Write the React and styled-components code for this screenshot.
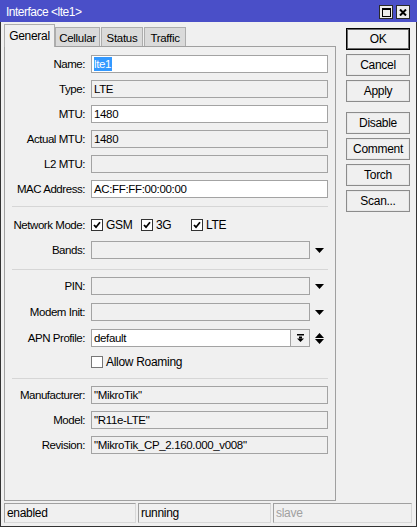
import React from 'react';
import styled, { createGlobalStyle } from 'styled-components';

const Global = createGlobalStyle`
  html, body { margin: 0; padding: 0; background: #f0f0f0; }
  body { font-family: "Liberation Sans", Arial, sans-serif; }
  * { box-sizing: border-box; }
`;

const Window = styled.div`
  width: 417px;
  height: 527px;
  display: flex;
  flex-direction: column;
  background: #f0f0f0;
  font-family: "Liberation Sans", Arial, sans-serif;
  font-size: 11px;
  letter-spacing: -0.3px;
  color: #000;
`;

const TitleBar = styled.div`
  height: 22px;
  flex-shrink: 0;
  background: #4a4fc8;
  color: #fff;
  font-size: 12px;
  letter-spacing: -0.5px;
  display: flex;
  align-items: center;
  padding: 0 7px 0 6px;
`;

const Title = styled.span`
  flex: 1;
  padding-top: 1px;
`;

const TitleButtons = styled.div`
  display: flex;
  gap: 3px;
  margin-top: 2px;
`;

const TitleButton = styled.div`
  width: 14px;
  height: 14px;
  background: #ececec;
  border: 1px solid #2a2a2a;
  display: flex;
  align-items: center;
  justify-content: center;
`;

const Frame = styled.div`
  flex: 1;
  display: flex;
  flex-direction: column;
  border: 1px solid #333;
  border-top: none;
  padding: 2px 3px 3px 3px;
`;

const Main = styled.div`
  display: flex;
  height: 477px;
  gap: 10px;
`;

const LeftCol = styled.div`
  width: 332px;
  display: flex;
  flex-direction: column;
`;

const TabBar = styled.div`
  height: 22px;
  display: flex;
  align-items: flex-end;
  position: relative;
  z-index: 1;
`;

const Tab = styled.div`
  width: ${(p) => p.$w}px;
  height: ${(p) => (p.$active ? 23 : 19)}px;
  margin-bottom: ${(p) => (p.$active ? -1 : 0)}px;
  margin-right: ${(p) => (p.$active ? 0 : 1)}px;
  background: ${(p) => (p.$active ? '#f0f0f0' : '#dadada')};
  border: 1px solid #adadad;
  border-bottom: none;
  display: flex;
  align-items: center;
  justify-content: center;
  padding-top: ${(p) => (p.$active ? 0 : 2)}px;
  font-size: ${(p) => (p.$active ? 12 : 11.5)}px;
`;

const Panel = styled.div`
  flex: 1;
  border: 1px solid #a0a0a0;
  background: #f0f0f0;
  padding: 8px 7px 0 0;
  display: flex;
  flex-direction: column;
`;

const Section = styled.div`
  display: flex;
  flex-direction: column;
  gap: ${(p) => p.$gap ?? 7}px;
  margin-top: ${(p) => p.$mt ?? 0}px;
`;

const Separator = styled.div`
  height: 1px;
  margin: ${(p) => p.$mt}px 0 0 7px;
  background: #d6d6d6;
`;

const Row = styled.div`
  display: grid;
  grid-template-columns: 80px 1fr;
  column-gap: 6px;
  align-items: center;
  height: ${(p) => p.$h ?? 18}px;
`;

const Label = styled.div`
  text-align: right;
  white-space: nowrap;
  font-size: 11.5px;
  letter-spacing: -0.45px;
`;

const FieldLine = styled.div`
  display: flex;
  align-items: center;
  height: 100%;
`;

const Field = styled.div`
  flex: 1;
  height: 18px;
  border: 1px solid #a3a3a3;
  background: ${(p) => (p.$editable ? '#fff' : '#f0f0f0')};
  padding: 0 2px;
  line-height: 16px;
  white-space: nowrap;
  overflow: hidden;
  font-size: 11.5px;
  letter-spacing: -0.35px;
`;

const Selected = styled.span`
  background: #3399ff;
  color: #fff;
  padding: 0 1px 0 0;
  display: inline-block;
  line-height: 14px;
  margin-top: 1px;
`;

const ArrowCell = styled.div`
  width: 18px;
  height: 18px;
  display: flex;
  align-items: center;
  justify-content: center;
  padding-left: 1px;
`;

const SmallButton = styled.div`
  width: 19px;
  height: 18px;
  border: 1px solid #a3a3a3;
  border-left: none;
  background: #f0f0f0;
  display: flex;
  align-items: center;
  justify-content: center;
`;

const CheckGroup = styled.div`
  display: flex;
  align-items: center;
`;

const CheckItem = styled.label`
  width: ${(p) => p.$w ?? 50}px;
  display: flex;
  align-items: center;
  gap: 3px;
  white-space: nowrap;
  font-size: 12px;
`;

const Box = styled.span`
  width: 12px;
  height: 12px;
  border: 1px solid ${(p) => (p.$checked ? '#333' : '#777')};
  background: #fff;
  display: inline-flex;
  align-items: center;
  justify-content: center;
  flex-shrink: 0;
`;

const ButtonCol = styled.div`
  width: 64px;
  display: flex;
  flex-direction: column;
  padding-top: 4px;
`;

const Button = styled.div`
  height: 22px;
  margin-top: ${(p) => p.$mt ?? 4}px;
  border: 1px solid ${(p) => (p.$default ? '#000' : '#8c8c8c')};
  box-shadow: ${(p) => (p.$default ? 'inset 0 0 0 1px #6a6a6a' : 'inset 0 0 0 1px #e8e8e8')};
  background: #f0f0f0;
  display: flex;
  align-items: center;
  justify-content: center;
  font-size: 12px;
`;

const StatusBar = styled.div`
  display: grid;
  grid-template-columns: 132px 133px 139px;
  column-gap: 2px;
  height: 20px;
  margin-top: 2px;
`;

const StatusCell = styled.div`
  border-top: 1px solid #a0a0a0;
  border-left: 1px solid #a0a0a0;
  border-right: 1px solid #d8d8d8;
  border-bottom: 1px solid #d8d8d8;
  padding: 0 2px;
  line-height: 18px;
  font-size: 12px;
  color: ${(p) => (p.$dim ? '#a0a0a0' : '#000')};
`;

const DownArrow = () => (
  <svg width="9" height="5" viewBox="0 0 9 5">
    <polygon points="0,0 9,0 4.5,5" fill="#000" />
  </svg>
);

const UpDown = () => (
  <svg width="9" height="11" viewBox="0 0 9 11">
    <polygon points="4.5,0 9,5 0,5" fill="#000" />
    <polygon points="0,6 9,6 4.5,11" fill="#000" />
  </svg>
);

const DropIcon = () => (
  <svg width="7" height="8" viewBox="0 0 7 8">
    <rect x="0" y="0" width="7" height="1.5" fill="#000" />
    <rect x="2" y="2.5" width="3" height="2" fill="#000" />
    <polygon points="0,4.5 7,4.5 3.5,8" fill="#000" />
  </svg>
);

const Check = () => (
  <svg width="8" height="8" viewBox="0 0 8 8">
    <path d="M1 4 L3 6.2 L7 1.2" stroke="#000" strokeWidth="1.8" fill="none" />
  </svg>
);

const CheckBox = ({ checked, label, w }) => (
  <CheckItem $w={w}>
    <Box $checked={checked}>{checked && <Check />}</Box>
    {label}
  </CheckItem>
);

const TextRow = ({ label, value, editable, children }) => (
  <Row>
    <Label>{label}</Label>
    <FieldLine>
      <Field $editable={editable}>{children ?? value}</Field>
    </FieldLine>
  </Row>
);

const DropRow = ({ label }) => (
  <Row>
    <Label>{label}</Label>
    <FieldLine>
      <Field />
      <ArrowCell>
        <DownArrow />
      </ArrowCell>
    </FieldLine>
  </Row>
);

export default function App() {
  return (
    <>
      <Global />
      <Window>
        <TitleBar>
          <Title>Interface &lt;lte1&gt;</Title>
          <TitleButtons>
            <TitleButton>
              <svg width="9" height="9" viewBox="0 0 9 9">
                <rect x="0.5" y="0.5" width="8" height="8" fill="none" stroke="#000" />
                <rect x="0" y="0" width="9" height="2" fill="#000" />
              </svg>
            </TitleButton>
            <TitleButton>
              <svg width="8" height="7" viewBox="0 0 8 7">
                <path d="M1 0.5 L7 6.5 M7 0.5 L1 6.5" stroke="#000" strokeWidth="2" />
              </svg>
            </TitleButton>
          </TitleButtons>
        </TitleBar>
        <Frame>
          <Main>
            <LeftCol>
              <TabBar>
                <Tab $active $w={51}>General</Tab>
                <Tab $w={45}>Cellular</Tab>
                <Tab $w={42}>Status</Tab>
                <Tab $w={42}>Traffic</Tab>
              </TabBar>
              <Panel>
                <Section>
                  <TextRow label="Name:" editable>
                    <Selected>lte1</Selected>
                  </TextRow>
                  <TextRow label="Type:" value="LTE" />
                  <TextRow label="MTU:" value="1480" editable />
                  <TextRow label="Actual MTU:" value="1480" />
                  <TextRow label="L2 MTU:" value="" />
                  <TextRow label="MAC Address:" value="AC:FF:FF:00:00:00" editable />
                </Section>
                <Separator $mt={8} />
                <Section $mt={9}>
                  <Row>
                    <Label>Network Mode:</Label>
                    <CheckGroup>
                      <CheckBox checked label="GSM" />
                      <CheckBox checked label="3G" />
                      <CheckBox checked label="LTE" />
                    </CheckGroup>
                  </Row>
                  <DropRow label="Bands:" />
                </Section>
                <Separator $mt={10} />
                <Section $mt={7} $gap={8}>
                  <DropRow label="PIN:" />
                  <DropRow label="Modem Init:" />
                  <Row>
                    <Label>APN Profile:</Label>
                    <FieldLine>
                      <Field $editable>default</Field>
                      <SmallButton>
                        <DropIcon />
                      </SmallButton>
                      <ArrowCell>
                        <UpDown />
                      </ArrowCell>
                    </FieldLine>
                  </Row>
                  <Row $h={14}>
                    <span />
                    <CheckGroup>
                      <CheckBox label="Allow Roaming" w={120} />
                    </CheckGroup>
                  </Row>
                </Section>
                <Separator $mt={9} />
                <Section $mt={7}>
                  <TextRow label="Manufacturer:" value={'"MikroTik"'} />
                  <TextRow label="Model:" value={'"R11e-LTE"'} />
                  <TextRow label="Revision:" value={'"MikroTik_CP_2.160.000_v008"'} />
                </Section>
              </Panel>
            </LeftCol>
            <ButtonCol>
              <Button $default $mt={0}>OK</Button>
              <Button>Cancel</Button>
              <Button>Apply</Button>
              <Button $mt={10}>Disable</Button>
              <Button>Comment</Button>
              <Button>Torch</Button>
              <Button>Scan...</Button>
            </ButtonCol>
          </Main>
          <StatusBar>
            <StatusCell>enabled</StatusCell>
            <StatusCell>running</StatusCell>
            <StatusCell $dim>slave</StatusCell>
          </StatusBar>
        </Frame>
      </Window>
    </>
  );
}
